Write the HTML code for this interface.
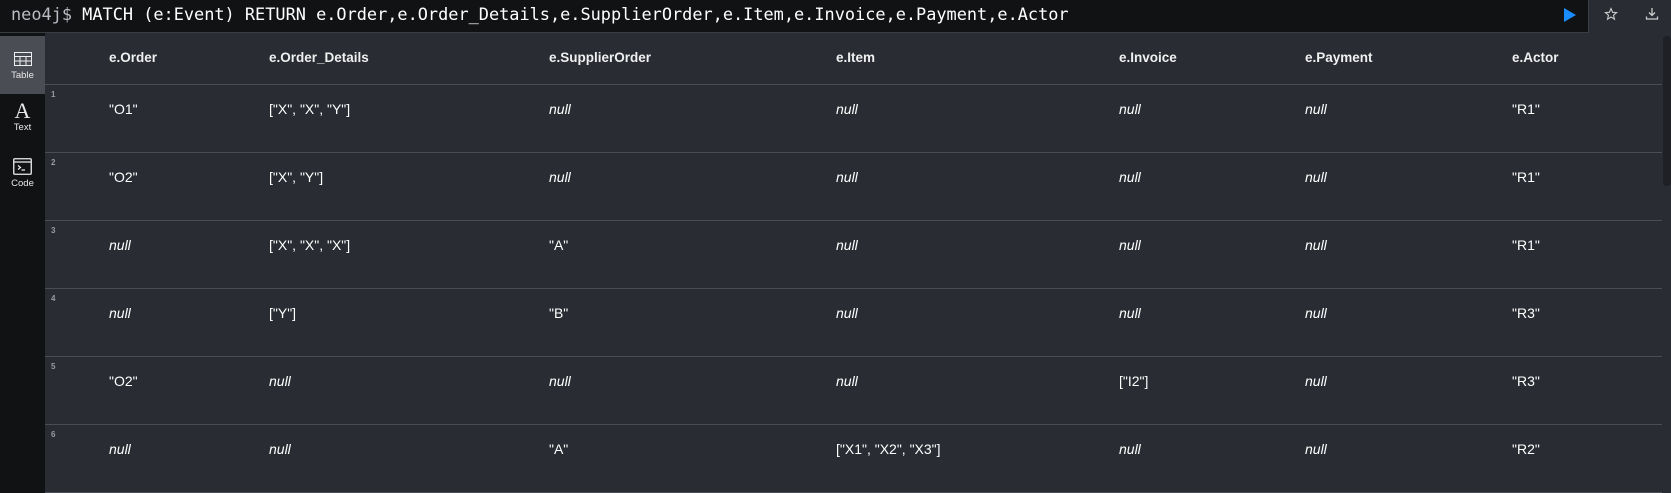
<!DOCTYPE html>
<html><head><style>
*{margin:0;padding:0;box-sizing:border-box}
body{width:1671px;height:493px;background:#292c33;font-family:"Liberation Sans",sans-serif;position:relative;overflow:hidden;color:#fff}
.top{position:absolute;left:0;top:0;width:1589px;height:33px;background:#111214;border-bottom:1px solid #3a3d44;border-right:1px solid #3a3d44}
.cmd{position:absolute;left:11px;top:4px;font-family:"DejaVu Sans Mono","Liberation Mono",monospace;font-size:16.9px;color:#fff;white-space:pre}
.cmd span{color:#b9bcc2}
.side{position:absolute;left:0;top:33px;width:45px;height:460px;background:#111214}
.tab{position:absolute;left:0;width:45px;height:58px;text-align:center;font-size:9.5px;color:#e8e8e8}
.tab.act{background:#4b4d55}
.row{position:absolute;left:45px;width:1617px;border-bottom:1px solid #4a4d55}
.c{position:absolute;font-size:14px;color:#fff}
.h{font-weight:bold;font-size:13.5px;color:#f0f0f0}
.i{font-style:italic}
.n{position:absolute;left:6px;top:5px;font-size:8px;font-weight:bold;color:#9a9ca2}
.sb{position:absolute;left:1663px;top:36px;width:8px;height:150px;background:#1e2025;border-radius:4px}
</style></head><body>
<div class="top"><div class="cmd"><span>neo4j$</span> MATCH (e:Event) RETURN e.Order,e.Order_Details,e.SupplierOrder,e.Item,e.Invoice,e.Payment,e.Actor</div>
<svg style="position:absolute;left:1564px;top:8px" width="12" height="14"><path d="M0 0L12 7L0 14Z" fill="#1a8cff"/></svg></div>
<svg style="position:absolute;left:1604px;top:7px" width="14" height="14" viewBox="0 0 14 14"><path d="M7 1.5L8.6 5.3L12.6 5.6L9.5 8.2L10.5 12.2L7 10L3.5 12.2L4.5 8.2L1.4 5.6L5.4 5.3Z" fill="none" stroke="#ccc" stroke-width="1.1"/></svg>
<svg style="position:absolute;left:1645px;top:7px" width="14" height="14" viewBox="0 0 14 14"><path d="M7 1V8M4 5.5L7 8.5L10 5.5M1.5 9.5V12H12.5V9.5" fill="none" stroke="#ccc" stroke-width="1.3"/></svg>
<div class="side">
<div class="tab act" style="top:3px"><svg style="margin-top:16px" width="18" height="14" viewBox="0 0 18 14"><rect x="0.5" y="0.5" width="17" height="13" fill="none" stroke="#eee"/><path d="M0 4.5H18M0 9H18M6 4.5V14M12 4.5V14" stroke="#eee"/></svg><div style="margin-top:1px">Table</div></div>
<div class="tab" style="top:61px"><div style="font-family:'Liberation Serif',serif;font-size:22px;margin-top:6px;line-height:22px">A</div><div>Text</div></div>
<div class="tab" style="top:119px"><svg style="margin-top:6px" width="19" height="17" viewBox="0 0 19 17"><rect x="0.75" y="0.75" width="17.5" height="15.5" rx="1" fill="none" stroke="#eee" stroke-width="1.3"/><path d="M1 4H18M5 7.5L7.5 9.5L5 11.5M8.5 12H12" fill="none" stroke="#eee" stroke-width="1.2"/></svg><div>Code</div></div>
</div>
<div class="row" style="top:36px;height:49px">
<div class="c h" style="left:64px;top:14px">e.Order</div><div class="c h" style="left:224px;top:14px">e.Order_Details</div><div class="c h" style="left:504px;top:14px">e.SupplierOrder</div><div class="c h" style="left:791px;top:14px">e.Item</div><div class="c h" style="left:1074px;top:14px">e.Invoice</div><div class="c h" style="left:1260px;top:14px">e.Payment</div><div class="c h" style="left:1467px;top:14px">e.Actor</div>
</div>
<div class="row" style="top:85px;height:68px"><div class="n">1</div>
<div class="c" style="left:64px;top:16px">"O1"</div><div class="c" style="left:224px;top:16px">["X", "X", "Y"]</div><div class="c i" style="left:504px;top:16px">null</div><div class="c i" style="left:791px;top:16px">null</div><div class="c i" style="left:1074px;top:16px">null</div><div class="c i" style="left:1260px;top:16px">null</div><div class="c" style="left:1467px;top:16px">"R1"</div></div>
<div class="row" style="top:153px;height:68px"><div class="n">2</div>
<div class="c" style="left:64px;top:16px">"O2"</div><div class="c" style="left:224px;top:16px">["X", "Y"]</div><div class="c i" style="left:504px;top:16px">null</div><div class="c i" style="left:791px;top:16px">null</div><div class="c i" style="left:1074px;top:16px">null</div><div class="c i" style="left:1260px;top:16px">null</div><div class="c" style="left:1467px;top:16px">"R1"</div></div>
<div class="row" style="top:221px;height:68px"><div class="n">3</div>
<div class="c i" style="left:64px;top:16px">null</div><div class="c" style="left:224px;top:16px">["X", "X", "X"]</div><div class="c" style="left:504px;top:16px">"A"</div><div class="c i" style="left:791px;top:16px">null</div><div class="c i" style="left:1074px;top:16px">null</div><div class="c i" style="left:1260px;top:16px">null</div><div class="c" style="left:1467px;top:16px">"R1"</div></div>
<div class="row" style="top:289px;height:68px"><div class="n">4</div>
<div class="c i" style="left:64px;top:16px">null</div><div class="c" style="left:224px;top:16px">["Y"]</div><div class="c" style="left:504px;top:16px">"B"</div><div class="c i" style="left:791px;top:16px">null</div><div class="c i" style="left:1074px;top:16px">null</div><div class="c i" style="left:1260px;top:16px">null</div><div class="c" style="left:1467px;top:16px">"R3"</div></div>
<div class="row" style="top:357px;height:68px"><div class="n">5</div>
<div class="c" style="left:64px;top:16px">"O2"</div><div class="c i" style="left:224px;top:16px">null</div><div class="c i" style="left:504px;top:16px">null</div><div class="c i" style="left:791px;top:16px">null</div><div class="c" style="left:1074px;top:16px">["I2"]</div><div class="c i" style="left:1260px;top:16px">null</div><div class="c" style="left:1467px;top:16px">"R3"</div></div>
<div class="row" style="top:425px;height:68px"><div class="n">6</div>
<div class="c i" style="left:64px;top:16px">null</div><div class="c i" style="left:224px;top:16px">null</div><div class="c" style="left:504px;top:16px">"A"</div><div class="c" style="left:791px;top:16px">["X1", "X2", "X3"]</div><div class="c i" style="left:1074px;top:16px">null</div><div class="c i" style="left:1260px;top:16px">null</div><div class="c" style="left:1467px;top:16px">"R2"</div></div>
<div class="sb"></div>
</body></html>
